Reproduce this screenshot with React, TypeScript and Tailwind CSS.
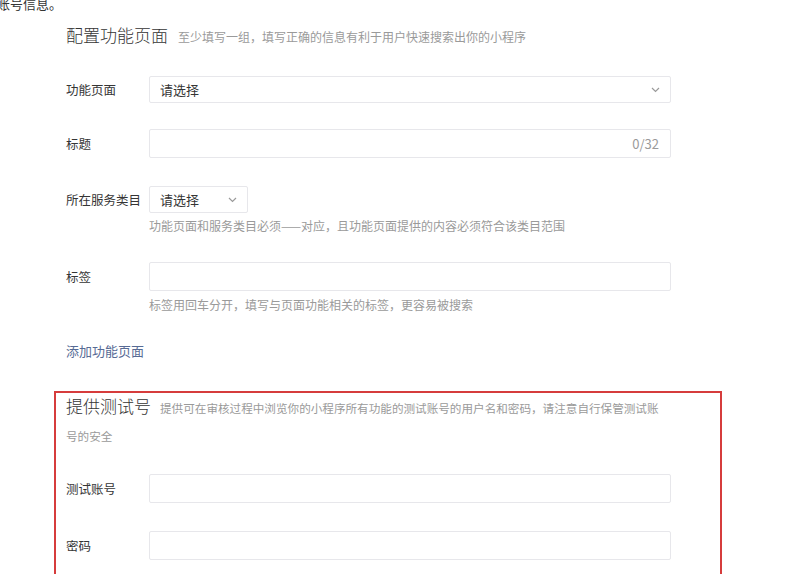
const font = {
  fontFamily: '"Noto Sans CJK SC", "Liberation Sans", sans-serif',
};

function Chevron() {
  return (
    <svg width="9" height="6" viewBox="0 0 9 6" className="shrink-0">
      <polyline
        points="1,1 4.5,4.5 8,1"
        fill="none"
        stroke="#9a9a9a"
        strokeWidth="1.2"
      />
    </svg>
  );
}

function Label({ text }: { text: string }) {
  return (
    <div className="w-[83px] shrink-0 text-[12.5px] leading-[20px] text-[#353535]">
      {text}
    </div>
  );
}

function TextInput({ counter }: { counter?: string }) {
  return (
    <div className="flex h-[29px] w-[522px] items-center justify-end rounded-[2px] border border-[#e7e7eb] bg-white pr-[11px]">
      {counter && (
        <span className="text-[13px] text-[#9a9a9a]">{counter}</span>
      )}
    </div>
  );
}

function Hint({ text }: { text: string }) {
  return (
    <div className="ml-[83px] text-[12px] leading-[20px] text-[#9a9a9a]">
      {text}
    </div>
  );
}

export default function App() {
  return (
    <div
      className="h-[574px] w-[796px] overflow-hidden bg-white"
      style={font}
    >
      <p className="-ml-[29px] -mt-[6px] whitespace-nowrap text-[13px] leading-[20px] text-[#353535]">
        测试账号信息。
      </p>

      <div className="pl-[66px]">
        <div className="mt-[9px] text-[12px] leading-[28px]">
          <span className="text-[17px] font-light leading-[20px] text-[#353535]">
            配置功能页面
          </span>
          <span className="ml-[10px] text-[#9a9a9a]">
            至少填写一组，填写正确的信息有利于用户快速搜索出你的小程序
          </span>
        </div>

        <div className="mt-[25px] flex items-center">
          <Label text="功能页面" />
          <div className="flex h-[27px] w-[522px] items-center justify-between rounded-[2px] border border-[#e7e7eb] pl-[10px] pr-[10px]">
            <span className="text-[13px] text-[#353535]">请选择</span>
            <Chevron />
          </div>
        </div>

        <div className="mt-[26px] flex items-center">
          <Label text="标题" />
          <TextInput counter="0/32" />
        </div>

        <div className="mt-[28px] flex items-center">
          <Label text="所在服务类目" />
          <div className="flex h-[27px] w-[99px] items-center justify-between rounded-[2px] border border-[#e7e7eb] pl-[10px] pr-[10px]">
            <span className="text-[13px] text-[#353535]">请选择</span>
            <Chevron />
          </div>
        </div>
        <div className="mt-[3px]">
          <Hint text="功能页面和服务类目必须——对应，且功能页面提供的内容必须符合该类目范围" />
        </div>

        <div className="mt-[26px] flex items-center">
          <Label text="标签" />
          <TextInput />
        </div>
        <div className="mt-[4px]">
          <Hint text="标签用回车分开，填写与页面功能相关的标签，更容易被搜索" />
        </div>

        <div className="mt-[26px] text-[13px] leading-[20px] text-[#576b95]">
          添加功能页面
        </div>
      </div>

      <div className="ml-[54px] mt-[30px] h-[260px] w-[668px] border-2 border-[#d63c3c] pl-[10px] pt-[1px]">
        <div className="w-[595px] text-[11.6px] leading-[28px]">
          <span className="text-[17px] font-light leading-[20px] text-[#353535]">
            提供测试号
          </span>
          <span className="ml-[9px] text-[#9a9a9a]">
            提供可在审核过程中浏览你的小程序所有功能的测试账号的用户名和密码，请注意自行保管测试账号的安全
          </span>
        </div>

        <div className="mt-[24px] flex items-center">
          <Label text="测试账号" />
          <TextInput />
        </div>

        <div className="mt-[28px] flex items-center">
          <Label text="密码" />
          <TextInput />
        </div>
      </div>
    </div>
  );
}
